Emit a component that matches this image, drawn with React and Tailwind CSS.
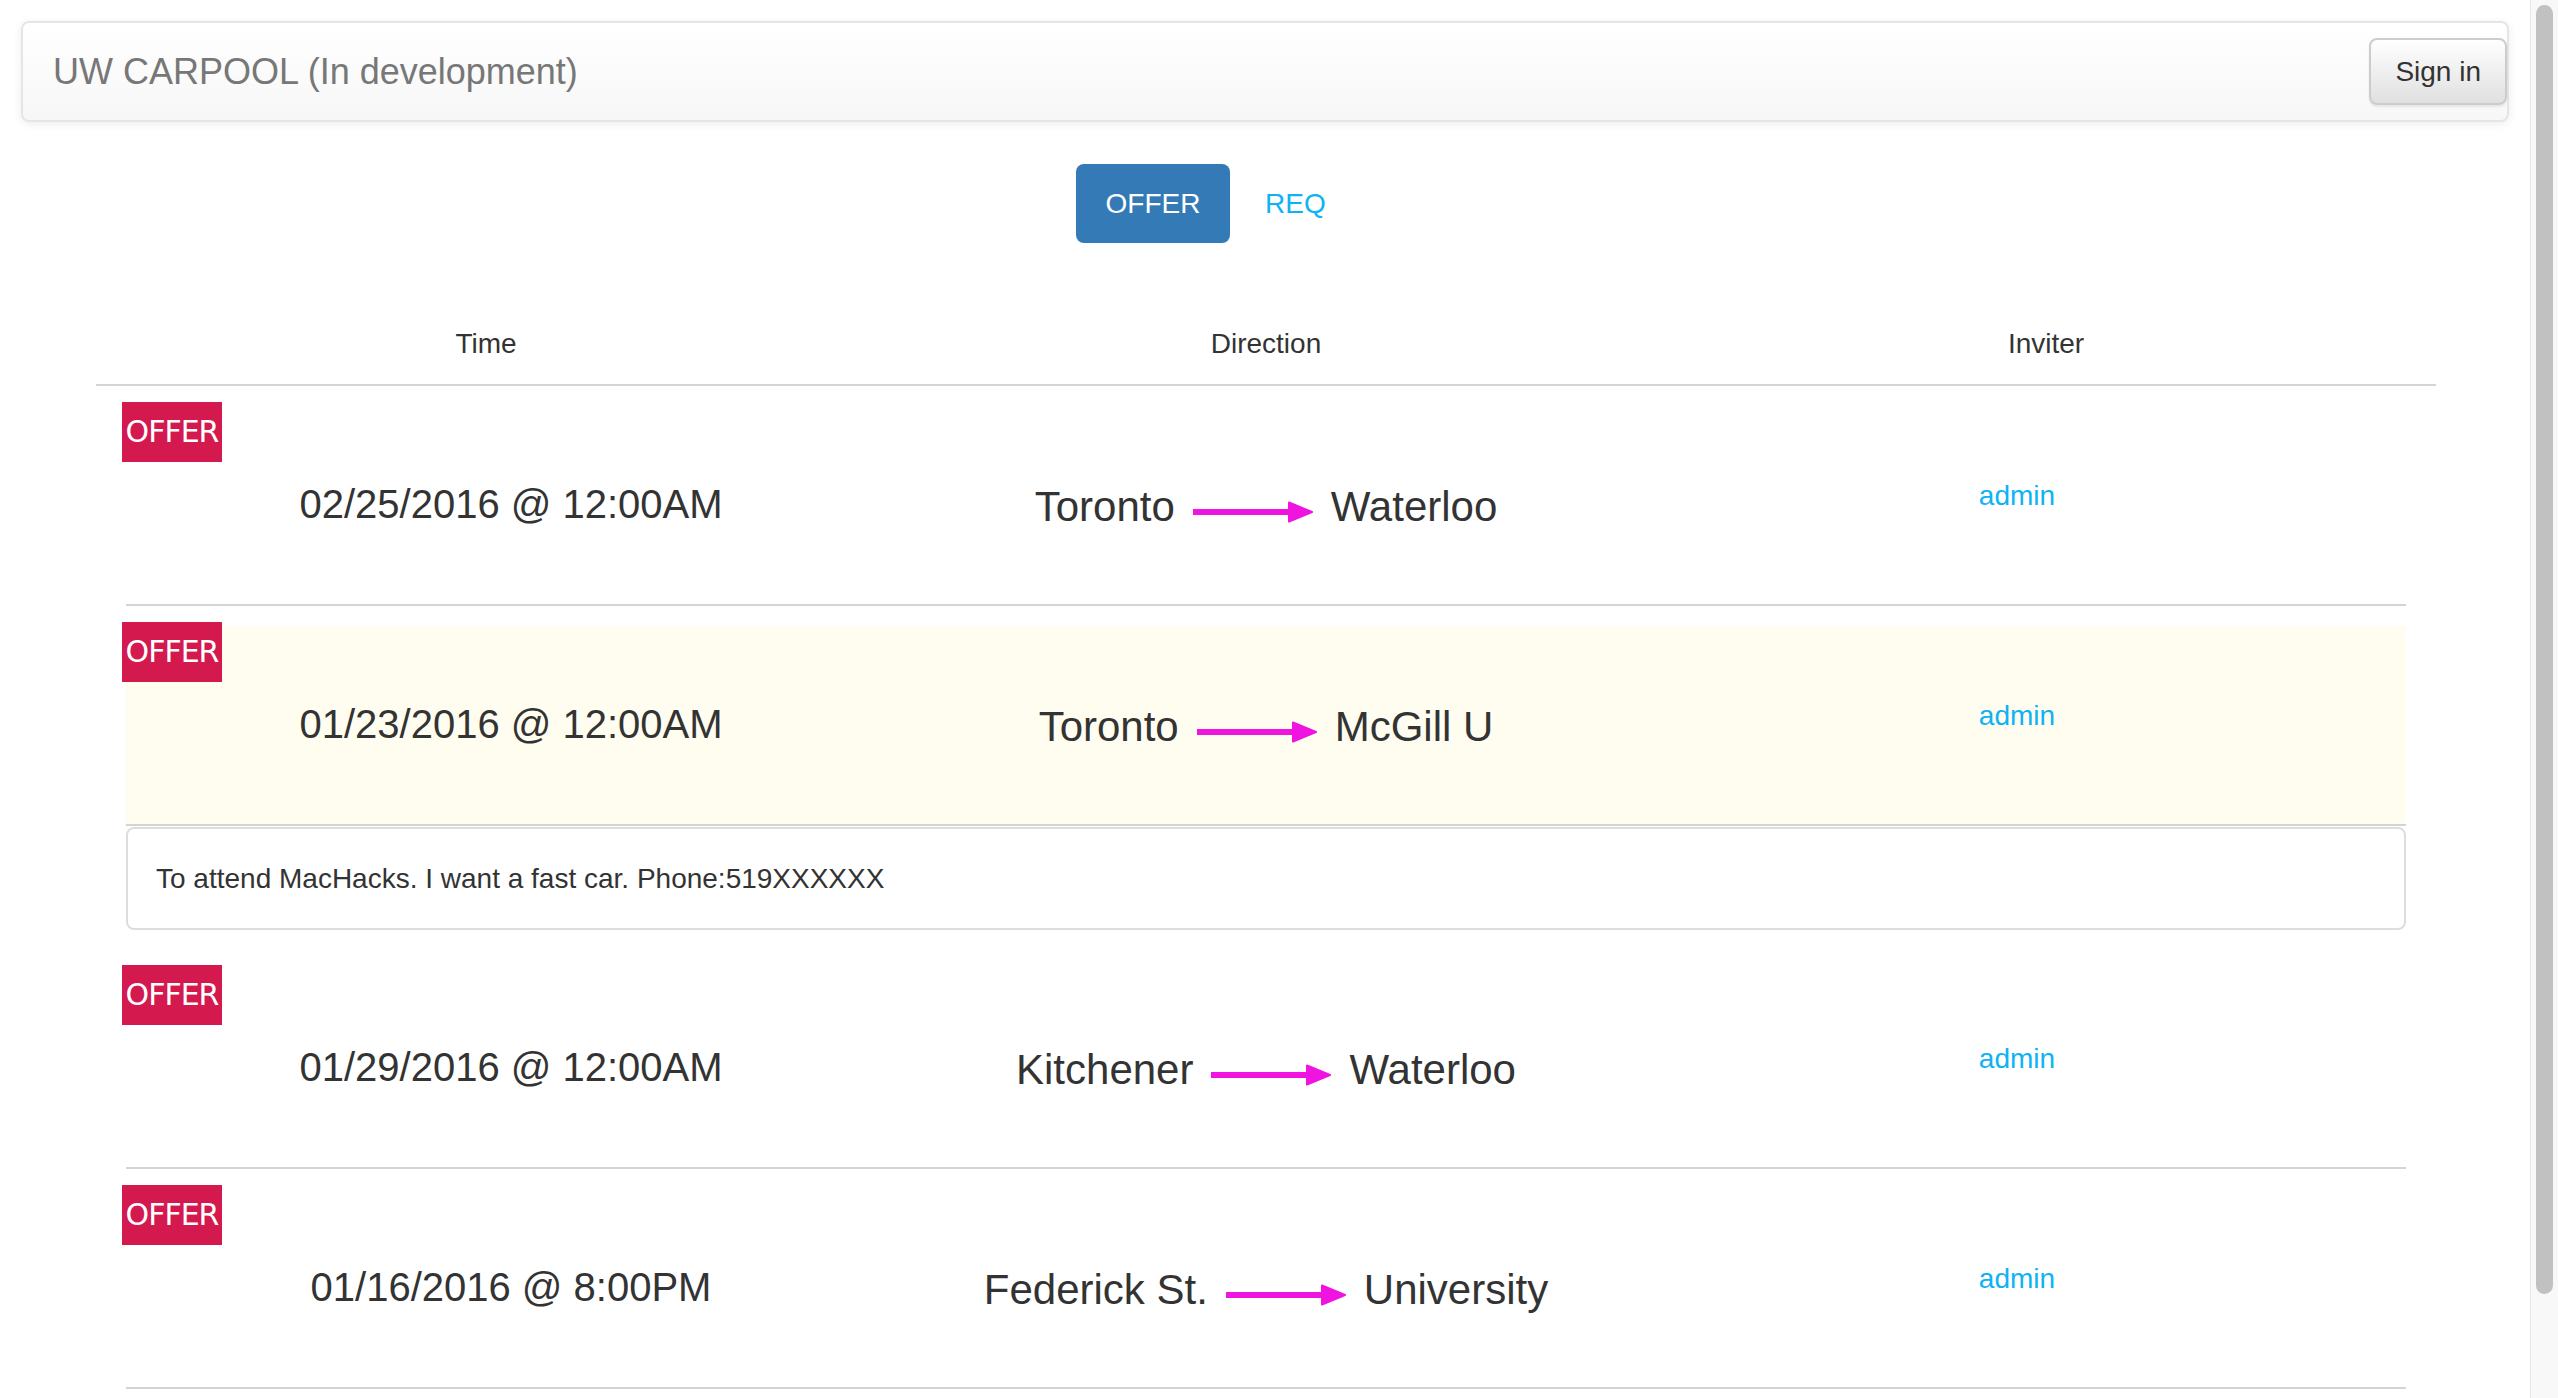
const rows = [
  { date: "02/25/2016 @ 12:00AM", from: "Toronto", to: "Waterloo", selected: false },
  {
    date: "01/23/2016 @ 12:00AM",
    from: "Toronto",
    to: "McGill U",
    selected: true,
    note: "To attend MacHacks. I want a fast car. Phone:519XXXXXX",
  },
  { date: "01/29/2016 @ 12:00AM", from: "Kitchener", to: "Waterloo", selected: false },
  { date: "01/16/2016 @ 8:00PM", from: "Federick St.", to: "University", selected: false },
];

function Arrow() {
  return (
    <svg width="120" height="22" viewBox="0 0 120 22" className="mt-[14px] mx-[18px] shrink-0">
      <rect x="0" y="8" width="100" height="6" fill="#f014e0" />
      <path d="M96 1.5 L119 11 L96 20.5 Z" fill="#f014e0" stroke="#f014e0" strokeWidth="2" strokeLinejoin="round" />
    </svg>
  );
}

function Row({ r }) {
  return (
    <div
      className={`relative mt-[20px] grid h-[200px] grid-cols-3 border-b-2 border-[#d4d4d4] ${
        r.selected ? "bg-[#fffdef]" : ""
      }`}
    >
      <div className="absolute -left-[4px] -top-[4px] flex h-[60px] w-[100px] items-center justify-center bg-[#d4194f] font-['DejaVu_Sans',sans-serif] text-[30px] leading-none tracking-[-1px] text-white">
        OFFER
      </div>
      <div className="flex items-center justify-center pl-[10px]">
        <span className="mb-[3px] text-[40px] leading-[48px] text-[#333]">{r.date}</span>
      </div>
      <div className="flex items-center justify-center">
        <span className="mt-[3px] text-[42px] leading-[50px] text-[#333]">{r.from}</span>
        <Arrow />
        <span className="mt-[3px] text-[42px] leading-[50px] text-[#333]">{r.to}</span>
      </div>
      <div className="flex items-center justify-center pr-[18px]">
        <span className="mb-[18px] text-[28px] leading-[40px] text-[#0eb3f4]">admin</span>
      </div>
    </div>
  );
}

export default function App() {
  return (
    <div className="flex h-[1398px] w-[2558px] overflow-hidden bg-white font-['Liberation_Sans',Arial,sans-serif] text-[#333]">
      <div className="flex min-w-0 flex-1 flex-col">
        <nav className="mx-[21px] mt-[21px] flex h-[101px] items-center justify-between rounded-[8px] border-2 border-[#e5e5e5] bg-linear-to-b from-white to-[#f7f7f7] pl-[30px] shadow-[0_2px_10px_rgba(0,0,0,0.075)]">
          <span className="text-[36px] leading-none text-[#777]">UW CARPOOL (In development)</span>
          <button className="h-[67px] rounded-[8px] border-2 border-[#ccc] bg-linear-to-b from-white to-[#e0e0e0] px-[24px] text-[28px] leading-none text-[#333] shadow-[0_2px_2px_rgba(0,0,0,0.075)]">
            Sign in
          </button>
        </nav>

        <div className="ml-[1076px] mt-[42px] flex items-center">
          <button className="h-[79px] w-[154px] rounded-[8px] bg-[#337ab7] text-[28px] leading-none text-white">
            OFFER
          </button>
          <span className="ml-[35px] text-[28px] leading-none text-[#0eb3f4]">REQ</span>
        </div>

        <div className="ml-[96px] mt-[81px] grid w-[2340px] grid-cols-3 border-b-2 border-[#d4d4d4] pb-[20px] text-center text-[28px] leading-[40px] text-[#333]">
          <span>Time</span>
          <span>Direction</span>
          <span>Inviter</span>
        </div>

        <div className="ml-[126px] flex w-[2280px] flex-col">
          {rows.map((r, i) => (
            <div key={i} className="flex flex-col">
              <Row r={r} />
              {r.note && (
                <div className="mb-[19px] mt-[1px] flex h-[103px] items-center rounded-[8px] border-2 border-[#dddddd] px-[28px] text-[28px] leading-[40px] text-[#333]">
                  {r.note}
                </div>
              )}
            </div>
          ))}
        </div>
      </div>

      <div className="h-full w-[28px] shrink-0 border-l border-[#e6e6e6] bg-[#f8f8f8]">
        <div className="ml-[5px] mt-[5px] h-[1289px] w-[17px] rounded-full bg-[#c1c1c1]" />
      </div>
    </div>
  );
}
